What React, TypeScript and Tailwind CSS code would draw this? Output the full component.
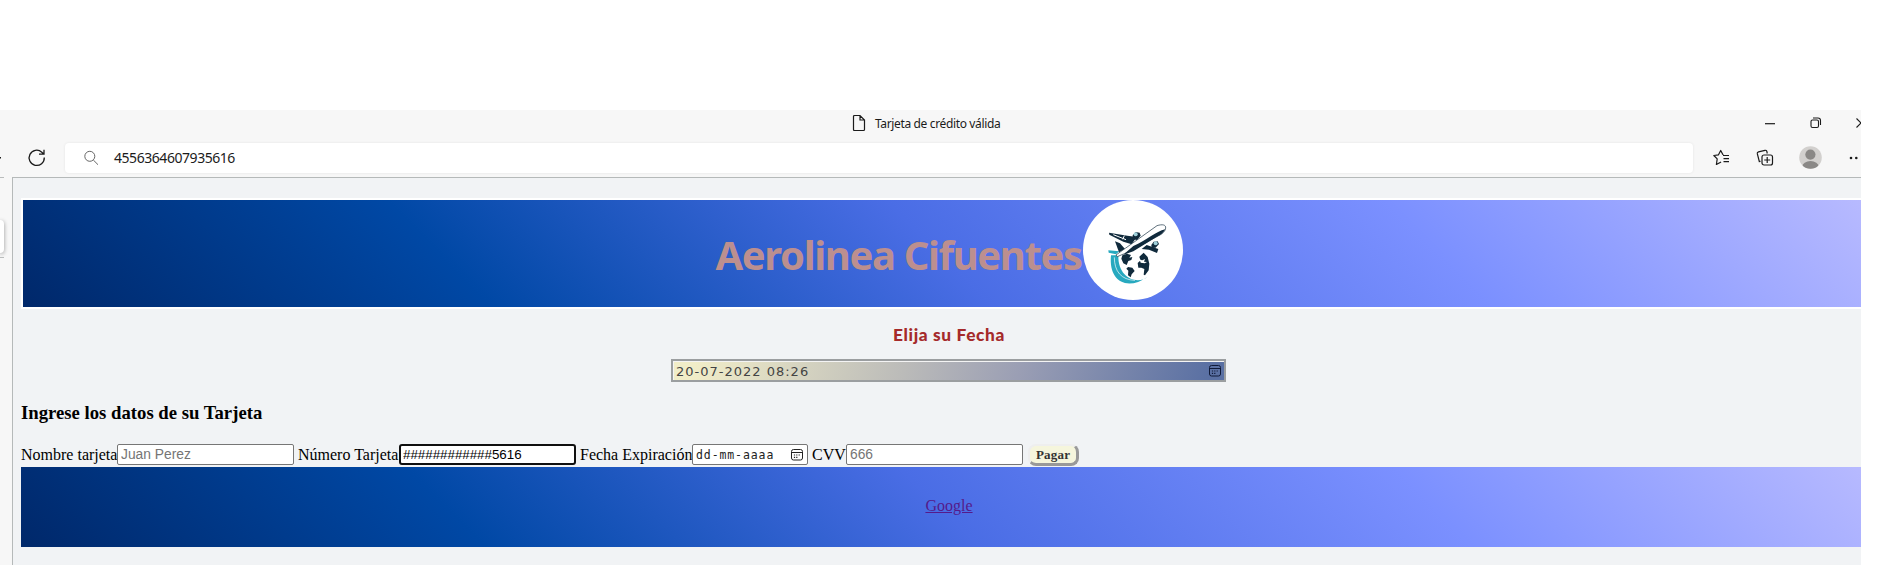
import React from "react";

const sky =
  "bg-[linear-gradient(45deg,#00286a_0%,#0048a5_24%,#4a6de5_49.5%,#7b90ff_75%,#b9bbff_100%)]";

function CalendarIcon({ className = "" }: { className?: string }) {
  return (
    <svg className={className} width="12" height="13" viewBox="0 0 12 13" fill="none" stroke="currentColor" strokeWidth="1">
      <rect x=".5" y="1.5" width="11" height="10.5" rx="2" />
      <path d="M.5 4.5h11" />
      <path d="M5.2 7h1.2M7.6 7h1.2M2.9 7h1.2M5.2 9.4h1.2M2.9 9.4h1.2" strokeWidth="1.1" />
    </svg>
  );
}

function Logo() {
  return (
    <div className="flex h-[100px] w-[100px] shrink-0 items-center justify-center rounded-full bg-white">
      <svg width="100" height="100" viewBox="0 0 300 300">
        <path d="M84 166C76 244 132 274 194 230C166 255 104 237 106 166Z" fill="#27a9bf" />
        <path d="M94 172C94 214 115 240 156 241" fill="none" stroke="#fff" strokeWidth="2" />
        <path d="M76 151l33 3-10 9-22-5z" fill="#27a9bf" />
        <path d="M118 166l14-5 12 4-5 8 9-2-3 9-9 3-5 12-10-5-6-14z" fill="#102a3c" />
        <path d="M135 201l13 2 7 10-9 10-3 9-8-6 1-14-6-6z" fill="#102a3c" />
        <path d="M169 170l13-12 12 13 5 20-2 20-11 15-4-2 2-17-9-4-9 0-2-14 9-8-3-7z" fill="#102a3c" />
        <path d="M170 179l8 2 8-4-3 8 9 1-7 4-12-2z" fill="#fff" />
        <path d="M78 98l55 9 28 4-15 22-25-8-42-21z" fill="#102a3c" />
        <path d="M91 104l38 15M124 107l-5 11" stroke="#fff" strokeWidth="3" />
        <path d="M96 124l15 6 15 17-18 10z" fill="#102a3c" />
        <path d="M99 165L222 77C238 72 249 74 248 84C247 94 238 102 227 107L147 151L103 170Z" fill="#fff" stroke="#102a3c" strokeWidth="2" />
        <path d="M120 165L151 138C191 121 218 94 247 88C242 98 233 105 219 112L151 154Z" fill="#102a3c" />
        <path d="M130 145l-7 15M223 83l14 4M183 111l28-20" stroke="#fff" strokeWidth="3" />
        <path d="M191 135l35 12-4 12-24-10-22-2z" fill="#102a3c" />
        <path d="M149 106l9-10 12 2 3 9-11 13-13-2z" fill="#102a3c" />
        <circle cx="158" cy="103" r="6" fill="#9fd0da" />
        <path d="M205 135l7-10 12-1 4 8-10 11-12 1z" fill="#102a3c" />
        <circle cx="218" cy="130" r="6" fill="#9fd0da" />
      </svg>
    </div>
  );
}

function BrowserBar() {
  return (
    <header className="h-[67px] overflow-hidden bg-[#f7f7f7] font-['Noto_Sans',sans-serif] text-[#1b1b1b]">
      <div className="flex h-[33px]">
        <div className="flex w-[866px] shrink-0 justify-end pt-[4px]">
          <svg width="14" height="18" viewBox="0 0 14 18" fill="none" stroke="currentColor" strokeWidth="1.2">
            <path d="M1.5 2.5Q1.5 1.5 2.5 1.5H8L12.5 6V15.5Q12.5 16.5 11.5 16.5H2.5Q1.5 16.5 1.5 15.5ZM8 1.5V6h4.5" />
          </svg>
        </div>
        <div className="ml-[9px] w-[880px] shrink-0 pt-[4px] text-[12px] leading-[20px] tracking-[-0.36px]">Tarjeta de crédito válida</div>
        <svg className="ml-[10px] mt-[13px] shrink-0" width="10" height="2"><path d="M0 .7h10" stroke="currentColor" strokeWidth="1.2" /></svg>
        <svg className="ml-[35px] mt-[7px] shrink-0" width="12" height="12" viewBox="0 0 12 12" fill="none" stroke="currentColor" strokeWidth="1.1">
          <rect x="1" y="3" width="7.5" height="7.5" rx="1.5" /><path d="M3 1H8Q10.5 1 10.5 3.5V8" />
        </svg>
        <svg className="ml-[34px] mt-[8px] shrink-0" width="11" height="11" fill="none" stroke="currentColor" strokeWidth="1.1"><path d="M.5 .5l9 9M9.5 .5l-9 9" /></svg>
      </div>
      <div className="flex h-[34px]">
        <svg className="mt-[14px] shrink-0" width="2" height="2"><path d="M0 .7h1" stroke="currentColor" strokeWidth="1.5" /></svg>
        <svg className="ml-[25px] mt-[5px] shrink-0" width="20" height="20" viewBox="0 0 20 20" fill="none" stroke="currentColor" strokeWidth="1.3">
          <path d="M17.3 9.5A7.6 7.6 0 1 1 14.8 4.2L17 6.2M17 1.7V6.2H12" />
        </svg>
        <div className="ml-[18px] flex h-[30px] w-[1628px] shrink-0 items-center rounded-[4px] bg-white shadow-[0_0_3px_rgba(0,0,0,0.08)]">
          <svg className="ml-[18px]" width="16" height="16" viewBox="0 0 16 16" fill="none" stroke="#666" strokeWidth="1">
            <circle cx="6.8" cy="6.3" r="5" /><path d="M10.3 10l4.7 4.7" />
          </svg>
          <span className="ml-[15px] text-[14px] leading-[20px] tracking-[-0.45px]">4556364607935616</span>
        </div>
        <svg className="ml-[20px] mt-[6px] shrink-0" width="17" height="18" viewBox="0 0 17 18" fill="none" stroke="currentColor" strokeWidth="1.2" strokeLinejoin="round">
          <path d="M10.5 5.5L9.7 5.3 7.7 1.5 5.5 5.8.8 6.5l3.4 3.4-.8 5.6 4.7-2.5M10 6.5h6M10.5 9.6h5.5M10.5 12.7h5.5" />
        </svg>
        <svg className="ml-[26px] mt-[6px] shrink-0" width="18" height="18" viewBox="0 0 18 18" fill="none" stroke="currentColor" strokeWidth="1.2">
          <rect x="6" y="6" width="10.5" height="10" rx="2" /><path d="M11.2 8v6M8.2 11h6M4.5 12.3L3.3 12.5 1.3 4.7Q1 3.2 2.5 2.8L9 1.3Q10.3 1 10.8 2.3L11.3 4.5" />
        </svg>
        <svg className="ml-[25px] mt-[3px] shrink-0" width="23" height="23" viewBox="0 0 23 23">
          <defs><clipPath id="avatar"><circle cx="11.5" cy="11.5" r="11.3" /></clipPath></defs>
          <g clipPath="url(#avatar)"><path fill="#d2d0ce" d="M0 0h23v23H0z" /><circle cx="11.4" cy="8.6" r="5.1" fill="#8a8886" /><ellipse cx="11.5" cy="20.7" rx="8.2" ry="5.7" fill="#8a8886" /></g>
        </svg>
        <svg className="ml-[27px] mt-[13px] shrink-0" width="12" height="4" fill="currentColor"><circle cx="2" cy="2" r="1.3" /><circle cx="7.3" cy="2" r="1.3" /></svg>
      </div>
    </header>
  );
}

function SideStrip() {
  return (
    <aside className="w-[12px] shrink-0 overflow-hidden bg-[#f7f7f7]">
      <div className="h-px w-[4px] bg-[#b9bcbc]" />
      <div className="mt-[42px] h-[33px] w-[4px] rounded-r-[4px] bg-white shadow-[0_1px_4px_rgba(0,0,0,0.4)]" />
      <div className="mt-[4px] h-px w-[4px] bg-[#b9bcbc]" />
    </aside>
  );
}

const field =
  "h-[21px] w-[177px] shrink-0 rounded-[2px] border border-[#767676] bg-white px-[3px] font-['Liberation_Sans',Arial,sans-serif] text-[13.8px] leading-[17px] outline-none placeholder:text-[#757575]";

export default function App() {
  return (
    <div className="h-[565px] w-full overflow-hidden bg-white pt-[110px]">
      <div className="w-[1861px] overflow-hidden">
        <BrowserBar />
        <div className="flex h-[388px]">
          <SideStrip />
          <main className="w-[1849px] shrink-0 overflow-hidden border-l border-t border-[#b5b9b9] bg-[#f1f3f5] pl-[8px] font-['Liberation_Serif',serif] text-[16px] text-black">
            <div className="mt-[20px] w-[1856px] border-2 border-white">
              <div className={`flex h-[107px] justify-center ${sky}`}>
                <h1 className="w-[367px] shrink-0 whitespace-nowrap pt-[27px] font-['Noto_Sans',sans-serif] text-[40px] font-bold leading-[56px] tracking-[-1.36px] text-[#bc8f8f]">Aerolinea Cifuentes</h1>
                <Logo />
              </div>
            </div>
            <h2 className="mt-[15px] w-[1856px] text-center font-['Lato',sans-serif] text-[17.3px] font-black leading-[22px] tracking-[0.65px] text-[#a52a2a]">Elija su Fecha</h2>
            <div className="ml-[650px] mt-[13px] flex h-[23px] w-[555px] items-center justify-between border-2 border-[#9b9ea0] bg-[linear-gradient(105deg,#f1edc8_4%,#bbbbb9_42%,#9a9eb4_63%,#5a70a3_97%)] pl-[3px] pr-[3px] text-[#444] shadow-[inset_1px_1px_0_#f4f4f4]">
              <span className="pt-[2px] font-['DejaVu_Sans',sans-serif] text-[13px] leading-[17px] tracking-[1px]">20-07-2022 08:26</span>
              <CalendarIcon className="text-[#101a38]" />
            </div>
            <h3 className="mt-[20px] text-[18.72px] font-bold leading-[22px]">Ingrese los datos de su Tarjeta</h3>
            <form className="mt-[20px] flex h-[23px] items-start whitespace-nowrap leading-[18px]">
              <label className="w-[96px] shrink-0 pt-[2px]">Nombre tarjeta</label>
              <input className={field} placeholder="Juan Perez" />
              <label className="ml-[4px] w-[101px] shrink-0 pt-[2px]">Número Tarjeta</label>
              <input className="h-[21px] w-[177px] shrink-0 rounded-[3px] border-2 border-[#101010] bg-white px-[2px] font-['Liberation_Sans',Arial,sans-serif] text-[13.333px] leading-[17px] outline-none" defaultValue="############5616" />
              <label className="ml-[4px] w-[112px] shrink-0 pt-[2px]">Fecha Expiración</label>
              <div className="flex h-[21px] w-[116px] shrink-0 items-center justify-between rounded-[2px] border border-[#767676] bg-white pl-[3px] pr-[4px] font-['DejaVu_Sans_Mono',monospace] text-[11.5px] tracking-[0.9px] text-[#222]">
                <span>dd-mm-aaaa</span>
                <CalendarIcon />
              </div>
              <label className="ml-[4px] w-[34px] shrink-0 pt-[2px]">CVV</label>
              <input className={field} placeholder="666" />
              <button type="button" className="ml-[5px] h-[22px] w-[51px] rounded-[8px] border-2 border-b-[3px] border-r-[3px] border-b-[#999] border-l-[#eeeeee] border-r-[#999] border-t-[#eeeeee] bg-[#f5f5dc] text-[13px] font-bold leading-[17px] tracking-[0.2px] text-[#333]">Pagar</button>
            </form>
            <footer className={`flex h-[80px] w-[1856px] justify-center pt-[30px] leading-[18px] ${sky}`}>
              <a className="h-[18px] text-[#551a8b] underline">Google</a>
            </footer>
          </main>
        </div>
      </div>
    </div>
  );
}
